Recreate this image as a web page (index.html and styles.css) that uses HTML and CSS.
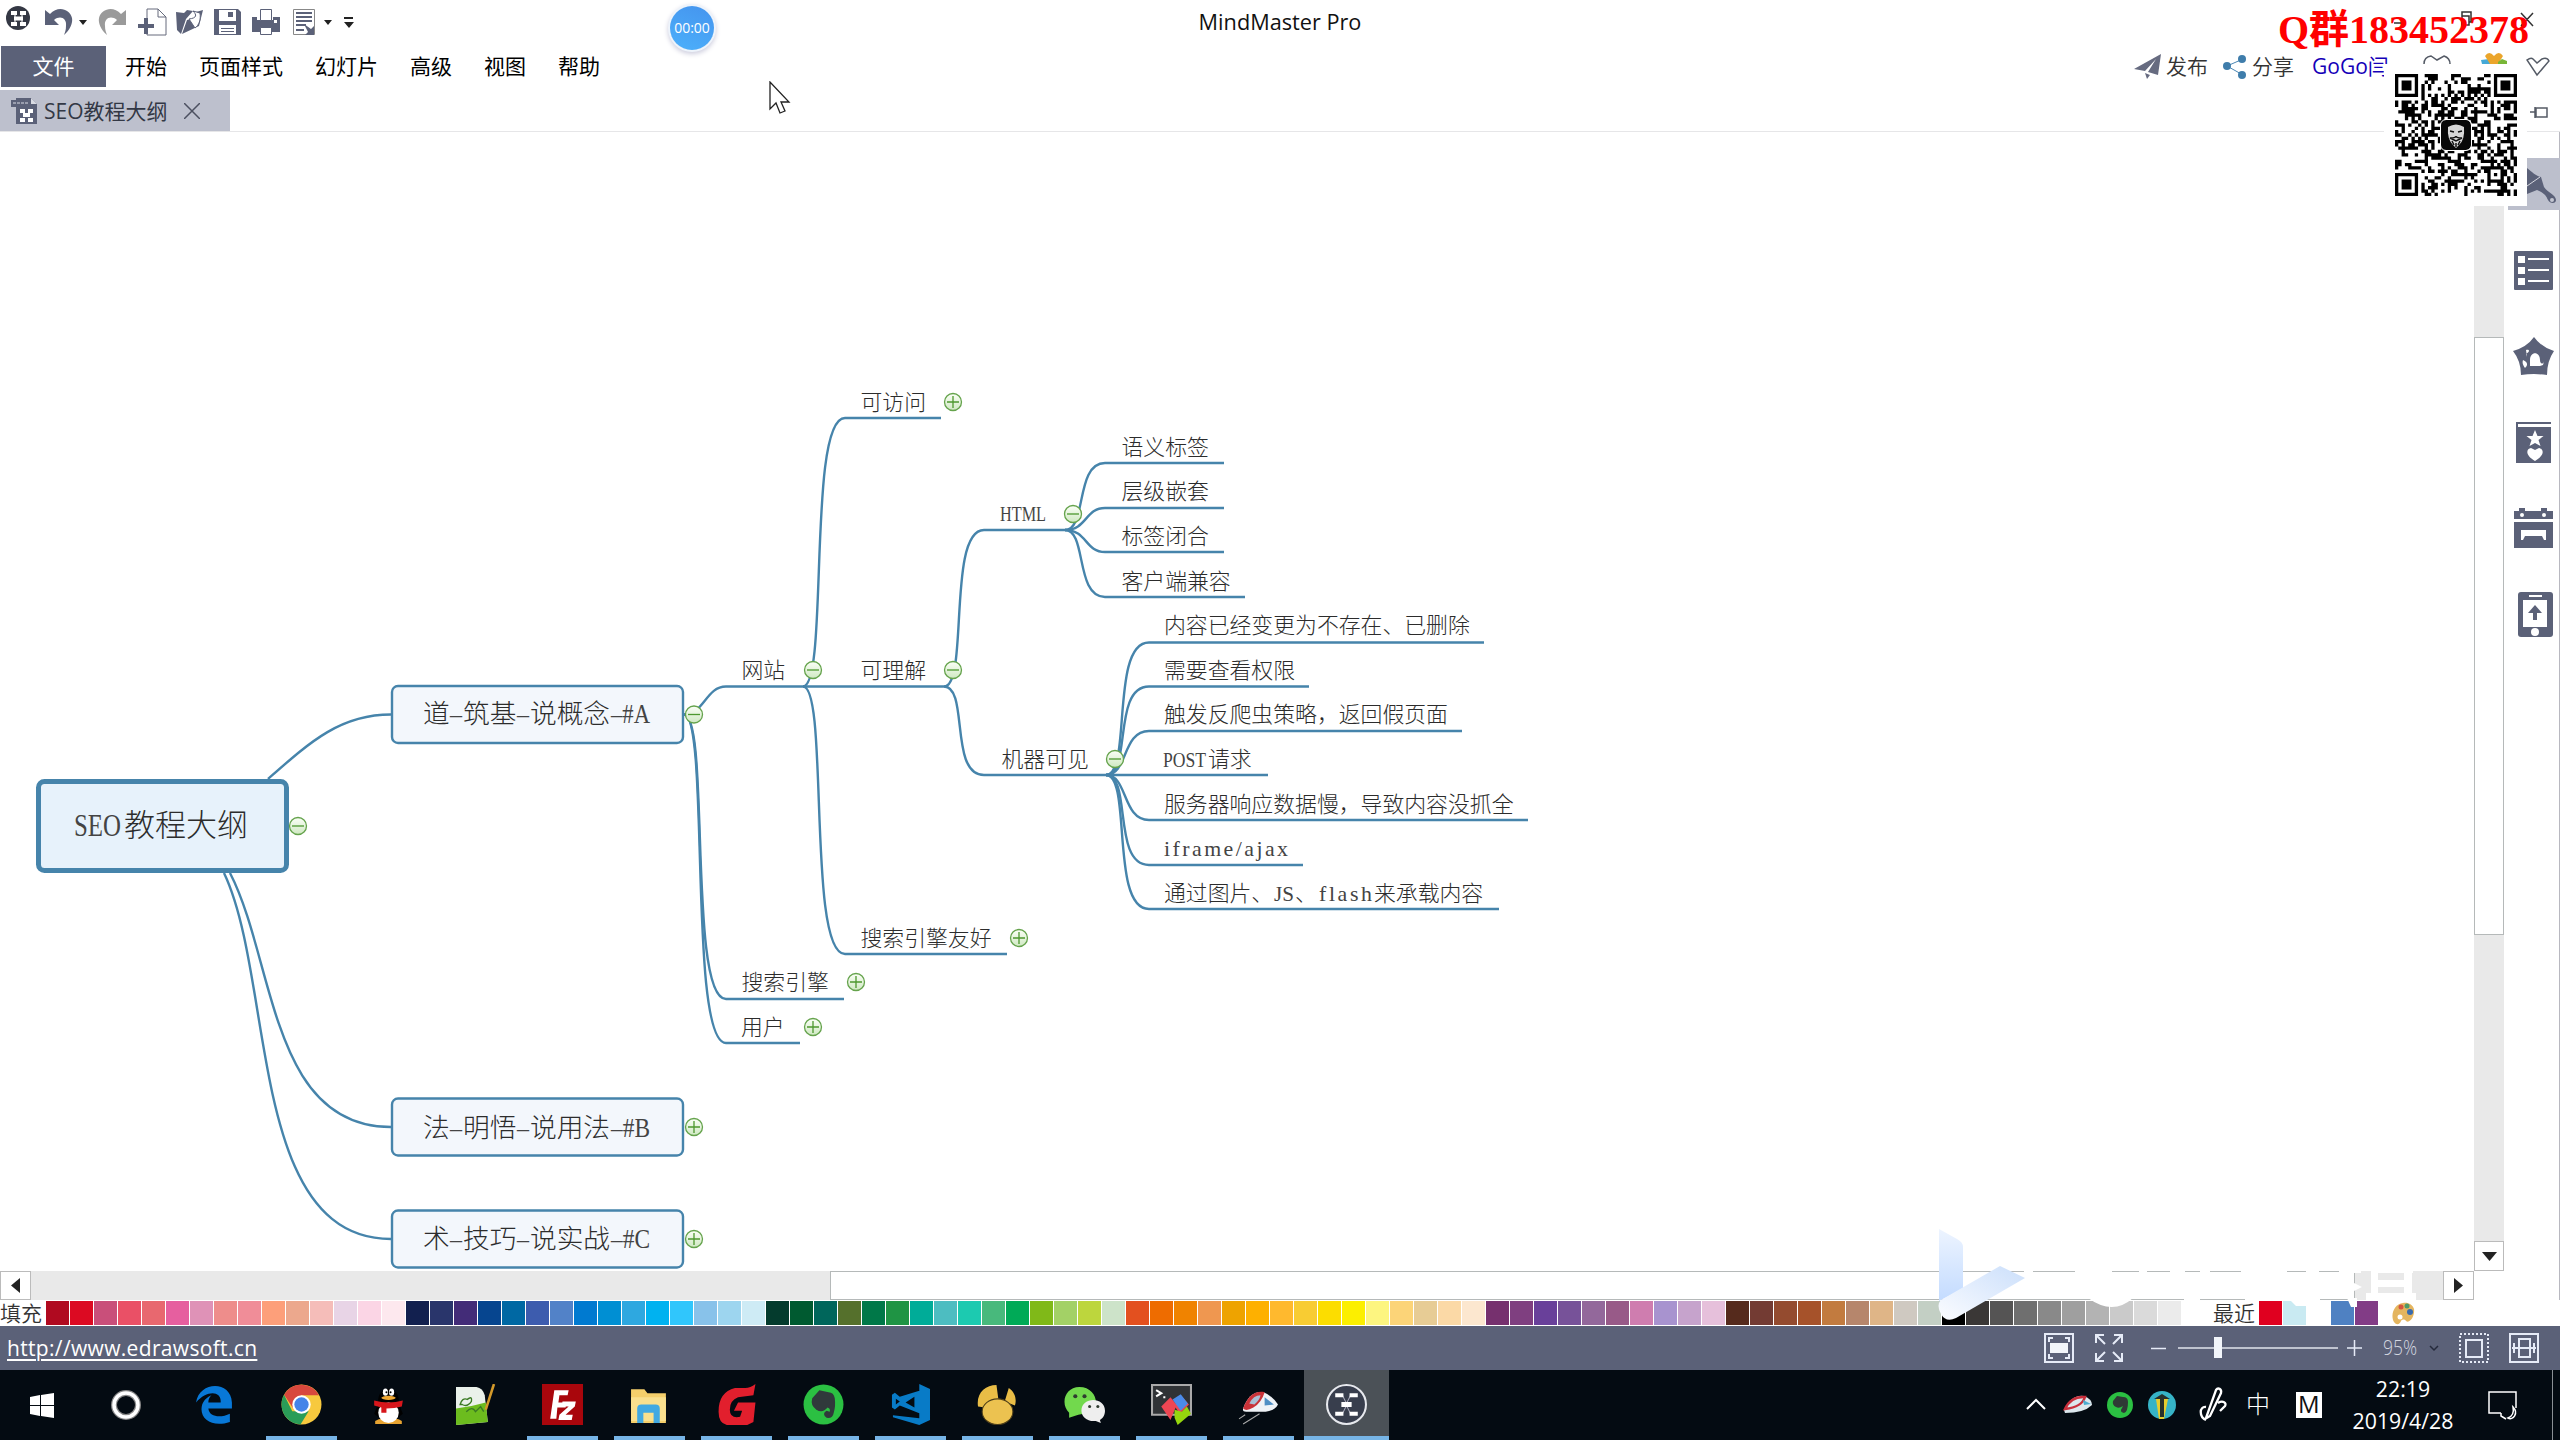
FILE: index.html
```html
<!DOCTYPE html>
<html lang="zh-CN">
<head>
<meta charset="utf-8">
<title>MindMaster Pro</title>
<link rel="stylesheet" href="styles.css">
</head>
<body>
<div class="app">
  <header class="titlebar">
    <svg class="quick" width="370" height="44" viewBox="0 0 370 44">
      <g><circle cx="18" cy="18" r="12" fill="#343844"/><path d="M11 11h6v4h-6zM20 11h6v4h-6zM14 16.500h9v4h-9zM11 22h6v4h-6zM20 22h6v4h-6z" fill="#fff"/><path d="M15 14v9M22 14v9" stroke="#fff"/></g>
      <path d="M45 10v15h14l-5-5c6-5 13-2 12 6 0 4-1 6-2 9 6-5 9-12 8-17-2-9-14-13-22-4z" fill="#5b6178"/>
      <path d="M79 20h8l-4 5zM324 20h8l-4 5zM344 22h10l-5 6zM344 17h9v2h-9z" fill="#222"/>
      <path d="M126 10v15h-14l5-5c-6-5-13-2-12 6 0 4 1 6 2 9-6-5-9-12-8-17 2-9 14-13 22-4z" fill="#9a9a9a"/>
      <path d="M147 19V9h11l8 8v18h-19v-5M158 9v8h8" fill="#fff" stroke="#666b7c"/><path d="M144 18h4v6h6v4h-6v6h-4v-6h-6v-4h6z" fill="#5b6178"/>
      <path d="M176 12l8 1 3-3 6 1-7 8-5 15-4-4zM182 34l5-14 10-2-1-6 7-2-4 16z" fill="#5b6178"/><path d="M189 19c8-1 8-4 4-8l7 2c1 7-1 12-5 15z" fill="#fff" stroke="#5b6178"/>
      <path d="M214 9h24l3 3v23h-27z" fill="#5b6178"/><path d="M219 10h17v11h-17zM219 25h17v9h-17z" fill="#fff"/><path d="M228 12h5v5h-5zM221 28h13v1h-13zM221 31h13v1h-13z" fill="#5b6178"/>
      <path d="M252 17h5v3h16v-3h7v15h-28z" fill="#5b6178"/><path d="M260.500 9.500h11v11h-11zM260.500 27.500h11v7h-11z" fill="#fff" stroke="#5b6178"/><path d="M274 20h3v3h-3z" fill="#fff"/>
      <path d="M293.500 9.500h21v25h-21z" fill="#fff" stroke="#888"/><path d="M296 13h16M296 17h16M296 21h16M296 25h10M296 30h8" stroke="#5b6178" stroke-width="2"/><path d="M304 24l7 5 3-3v9h-9l3-3z" fill="#5b6178"/>
    </svg>
    <h1 class="window-title">MindMaster Pro</h1>
  </header>

  <nav class="menubar">
    <a class="menu-file">文件</a>
    <a>开始</a><a>页面样式</a><a>幻灯片</a><a>高级</a><a>视图</a><a>帮助</a>
    <div class="account">
      <svg width="27" height="26" viewBox="0 0 27 26"><path d="M0 15L27 0l-3 21-10-3 8-13-11 12zM11 19l5 2-3 4z" fill="#666b80"/></svg>
      <span>发布</span>
      <svg class="share" width="24" height="24" viewBox="0 0 24 24"><path d="M20 4L4 11l16 9" fill="none" stroke="#4a86b3"/><g fill="#3f7dab"><circle cx="19" cy="4" r="4"/><circle cx="4" cy="11" r="4"/><circle cx="19" cy="20" r="4"/></g></svg>
      <span>分享</span>
      <span class="user">GoGo闫</span>
    </div>
  </nav>

  <div class="tabs">
    <div class="tab">
      <svg width="27" height="28" viewBox="0 0 27 28"><path d="M5 1h15l6 6v20H5V10H0V3h5z" fill="#5b6178"/><path d="M20 1v6h6z" fill="#d9dbe3"/><path d="M2 6h15" stroke="#d9dbe3" stroke-dasharray="3 1"/><path d="M9 12h5v4H9zM17 12h5v4h-5zM12 16h7v4h-7zM9 21h5v4H9zM17 21h5v4h-5z" fill="#fff"/></svg>
      <span>SEO教程大纲</span>
      <svg class="close" width="16" height="16" viewBox="0 0 16 16"><path d="M0 0l16 16M16 0L0 16" stroke="#4c5060" stroke-width="1.500"/></svg>
    </div>
  </div>

  <main class="workspace">
    <div class="canvas">
      <svg class="map" width="2474" height="1139" viewBox="0 132 2474 1139">
        <defs>
          <linearGradient id="ball" x1="0" y1="0" x2="0" y2="1"><stop offset="0" stop-color="#fbfff7"/><stop offset="1" stop-color="#cfe8c2"/></linearGradient>
          <g id="plus"><circle r="8.500" class="ball"/><path d="M-6 0h12M0-6v12"/></g>
          <g id="minus"><circle r="8.500" class="ball"/><path d="M-6 0h12"/></g>
        </defs>
        <g class="links">
          <path d="M268 779C310 742 340 714.500 391 714.500"/>
          <path d="M230 873C275 960 270 1127 391 1127"/>
          <path d="M224 873C275 980 248 1239 391 1239"/>
          <path d="M684 714.500c20 0 22-28 42-28h218"/>
          <path d="M684 714.500c26 0 4 284.500 42 284.500h118"/>
          <path d="M684 714.500c26 0 4 328.500 42 328.500h74"/>
          <path d="M803 686.500c26 0 4-268.500 42-268.500h96"/>
          <path d="M803 686.500c26 0 4 267.500 42 267.500h162"/>
          <path d="M944 686.500c25 0 3-156.500 40-156.500h81"/>
          <path d="M944 686.500c25 0 5 88.500 40 88.500h122"/>
          <path d="M1065 530c22 0 10-67 40-67h119"/>
          <path d="M1065 530c22 0 20-22 40-22h119"/>
          <path d="M1065 530c22 0 20 22 40 22h119"/>
          <path d="M1065 530c22 0 10 67 40 67h140"/>
          <path d="M1106 775c26 0 4-132.500 43-132.500h335"/>
          <path d="M1106 775c26 0 6-88.500 43-88.500h160"/>
          <path d="M1106 775c22 0 16-44 43-44h313"/>
          <path d="M1106 775h162"/>
          <path d="M1106 775c22 0 16 45 43 45h379"/>
          <path d="M1106 775c26 0 6 90 43 90h154"/>
          <path d="M1106 775c26 0 4 134 43 134h350"/>
        </g>
        <g class="boxes">
          <rect class="root" x="38.500" y="781.500" width="248" height="89" rx="6"/>
          <rect x="392" y="686" width="291" height="57" rx="6"/>
          <rect x="392" y="1098.500" width="291" height="57" rx="6"/>
          <rect x="392" y="1210.500" width="291" height="57" rx="6"/>
        </g>
        <g class="t-root"><text y="836"><tspan class="lat" x="74" textLength="47" lengthAdjust="spacingAndGlyphs">SEO</tspan><tspan x="124">教程大纲</tspan></text></g>
        <g class="t-main">
          <text y="723"><tspan x="423">道</tspan><tspan class="lat" x="450" textLength="12" lengthAdjust="spacingAndGlyphs">–</tspan><tspan x="463">筑基</tspan><tspan class="lat" x="517" textLength="12" lengthAdjust="spacingAndGlyphs">–</tspan><tspan x="530">说概念</tspan><tspan class="lat" x="611" textLength="39" lengthAdjust="spacingAndGlyphs">–#A</tspan></text>
          <text y="1137"><tspan x="423">法</tspan><tspan class="lat" x="450" textLength="12" lengthAdjust="spacingAndGlyphs">–</tspan><tspan x="463">明悟</tspan><tspan class="lat" x="517" textLength="12" lengthAdjust="spacingAndGlyphs">–</tspan><tspan x="530">说用法</tspan><tspan class="lat" x="611" textLength="39" lengthAdjust="spacingAndGlyphs">–#B</tspan></text>
          <text y="1248"><tspan x="423">术</tspan><tspan class="lat" x="450" textLength="12" lengthAdjust="spacingAndGlyphs">–</tspan><tspan x="463">技巧</tspan><tspan class="lat" x="517" textLength="12" lengthAdjust="spacingAndGlyphs">–</tspan><tspan x="530">说实战</tspan><tspan class="lat" x="611" textLength="39" lengthAdjust="spacingAndGlyphs">–#C</tspan></text>
        </g>
        <g class="t-sub">
          <text x="741.500" y="678">网站</text>
          <text x="741.500" y="990">搜索引擎</text>
          <text x="741" y="1035">用户</text>
          <text x="860.500" y="410">可访问</text>
          <text x="860.500" y="678">可理解</text>
          <text x="860.500" y="946">搜索引擎友好</text>
          <text class="lat" x="1000" y="521" textLength="46" lengthAdjust="spacingAndGlyphs">HTML</text>
          <text x="1001.500" y="767">机器可见</text>
          <text x="1121.500" y="455">语义标签</text>
          <text x="1121.500" y="499">层级嵌套</text>
          <text x="1121.500" y="544">标签闭合</text>
          <text x="1121.500" y="589">客户端兼容</text>
          <text x="1164" y="633">内容已经变更为不存在、已删除</text>
          <text x="1164" y="678">需要查看权限</text>
          <text x="1164" y="722">触发反爬虫策略，返回假页面</text>
          <text y="767"><tspan class="lat" x="1163" textLength="43" lengthAdjust="spacingAndGlyphs">POST</tspan><tspan x="1208">请求</tspan></text>
          <text x="1164" y="812">服务器响应数据慢，导致内容没抓全</text>
          <text class="lat" x="1164" y="856" textLength="124" lengthAdjust="spacing">iframe/ajax</text>
          <text y="901"><tspan x="1164">通过图片、</tspan><tspan class="lat" x="1274" textLength="20" lengthAdjust="spacingAndGlyphs">JS</tspan><tspan x="1295">、</tspan><tspan class="lat" x="1319" textLength="53" lengthAdjust="spacing">flash</tspan><tspan x="1374">来承载内容</tspan></text>
        </g>
        <g class="balls">
          <use href="#minus" x="298" y="826"/><use href="#minus" x="694" y="714.500"/><use href="#plus" x="694" y="1127"/><use href="#plus" x="694" y="1239"/>
          <use href="#plus" x="953" y="402"/><use href="#minus" x="1073" y="514"/><use href="#minus" x="813" y="670"/><use href="#minus" x="953" y="670"/>
          <use href="#minus" x="1115" y="759"/><use href="#plus" x="1019" y="938"/><use href="#plus" x="856" y="982"/><use href="#plus" x="813" y="1027"/>
        </g>
      </svg>
      <div class="hscroll">
        <span class="arrow"><svg width="9" height="15"><path d="M9 0v15L0 7.500z" fill="#222"/></svg></span>
        <span class="track-a"></span><span class="thumb-h"></span><span class="track-b"></span>
        <span class="arrow"><svg width="9" height="15"><path d="M0 0v15l9-7.500z" fill="#222"/></svg></span>
      </div>
    </div>
    <div class="vscroll">
      <span class="v-blank"></span><span class="track-c"></span><span class="thumb-v"></span><span class="track-d"></span>
      <span class="arrow-v"><svg width="15" height="9"><path d="M0 0h15L7.500 9z" fill="#222"/></svg></span>
    </div>
    <aside class="side">
      <div class="side-on"><svg width="30" height="40" viewBox="0 0 30 40"><path d="M0 1c5 4 9 8 14 9l3 10c3 5 12 8 12 13 0 4-6 4-8 0-2-5-4-7-11-10L0 27z" fill="#5b6178"/><path d="M0 19L13 10" stroke="#d7d9e0"/><circle cx="25" cy="33" r="2" fill="#c3c6d1"/></svg></div>
      <svg width="56" height="440" viewBox="2504 230 56 440">
        <rect x="2515" y="251" width="39" height="39" rx="1" fill="#5b6178"/><path d="M2519 256h7v7h-7zM2519 267h7v7h-7zM2519 278h7v7h-7z" fill="#fff"/><path d="M2529 259h21M2529 270h21M2529 281h21" stroke="#fff" stroke-width="2"/>
        <path d="M2535 337q7 10 20 14-7 10-7 24-13-2-26 0 0-14-8-24 14-4 21-14z" fill="#5b6178"/><path d="M2531 360c0-9 10-9 10 0 0 4 3 5 4 1l-1 4-3 1h-10zM2524 360c5 2 5 5 2 8-2-3-3-5-2-8zM2527 350c4-1 4 2 0 4l1 3" fill="#fff"/>
        <path d="M2517 422h35v41h-35z" fill="#5b6178"/><path d="M2519 424h33v3h-33z" fill="#fff"/><path d="M2536 430l2.500 6h6l-5 4 2 6-5.500-3-5.500 3 2-6-5-4h6zM2536 461c-10-6-9-12-4-13l4 2 4-2c5 1 6 7-4 13z" fill="#fff"/>
        <path d="M2515 511h5v-3h6v3h16v-3h6v3h6v8h-39zM2515 522h39v26h-39z" fill="#5b6178"/><circle cx="2523" cy="515" r="2" fill="#fff"/><circle cx="2545" cy="515" r="2" fill="#fff"/><path d="M2522 530h25v10h-2l-2-4h-17l-2 4h-2z" fill="#fff"/>
        <rect x="2519" y="592" width="35" height="45" rx="3" fill="#5b6178"/><path d="M2524 600h24v27h-24z" fill="#fff"/><path d="M2530 596h13" stroke="#fff" stroke-width="2"/><circle cx="2536" cy="632" r="4" fill="#fff"/><path d="M2536 605l7 8h-5v7h-4v-7h-5z" fill="#5b6178"/>
      </svg>
    </aside>
  </main>

  <div class="palette">
    <span class="label">填充</span>
    <div class="swatches" id="fills"></div>
    <span class="label recent">最近</span>
    <div class="swatches" id="recent"></div>
    <svg class="paint" width="23" height="23" viewBox="0 0 23 23"><path d="M11 1C2 2-2 13 2 20c3 4 6 2 7-1 1-2 4-2 5 0 4 3 9-5 8-12-1-4-6-7-11-6z" fill="#e4b55f"/><circle cx="9" cy="5" r="2.500" fill="#d6543f"/><circle cx="15" cy="4" r="2.500" fill="#4d9a68"/><circle cx="18" cy="10" r="3" fill="#376bb0"/><circle cx="8" cy="15" r="2.500" fill="#fff"/></svg>
  </div>

  <footer class="status">
    <a class="site">http://www.edrawsoft.cn</a>
    <svg class="zoomer" width="520" height="44" viewBox="2040 1326 520 44">
      <g fill="none" stroke="#e6ebf7" stroke-width="2">
        <path d="M2045 1334h28v28h-28zM2049 1342v-4h4M2069 1342v-4h-4M2049 1354v4h4M2069 1354v4h-4"/>
        <path d="M2105 1344l-9-9M2096 1343v-8h8M2113 1344l9-9M2122 1343v-8h-8M2105 1352l-9 9M2096 1353v8h8M2113 1352l9 9M2122 1353v8h-8"/>
        <path d="M2151 1348.500h15M2347 1348h15M2354.500 1340v16" stroke-width="1.500"/>
        <path d="M2178 1348h160" stroke="#bfc3cf"/>
        <path d="M2430 1346l4 4 4-4" stroke="#252a3c" stroke-width="1.500"/>
        <path d="M2460 1334h28v28h-28z" stroke-dasharray="2 2"/><path d="M2466 1340h16v17h-16zM2510 1334h28v28h-28zM2519 1339h11v18h-11zM2512 1348h24M2514 1343v10M2534 1343v10"/>
      </g>
      <path d="M2050 1343h18v10h-18zM2214 1337h8v21h-8z" fill="#f2f5fa"/>
      <text x="2383" y="1355" textLength="34" lengthAdjust="spacingAndGlyphs">95%</text>
    </svg>
  </footer>

  <div class="taskbar">
    <div class="start"><svg width="26" height="26" viewBox="0 0 26 26"><path d="M1 5l10-2v10H1zM12 3l13-2v12H12zM1 14h10v10L1 22zM12 14h13v12l-13-2z" fill="#fff"/></svg></div>
    <div class="start"><svg width="32" height="32"><circle cx="16" cy="16" r="12" fill="none" stroke="#888" stroke-width="6"/><circle cx="16" cy="16" r="12" fill="none" stroke="#fff" stroke-width="3.500"/></svg></div>
    <div class="apps">
      <div><svg viewBox="0 0 40 40"><path d="M2 18C5-3 36-4 37 18v6H14c1 9 13 9 21 5v8C18 43 4 34 8 20c2-5 5-7 9-9-2 2-3 4-3 7h12c1-12-14-12-24 0z" fill="#0878d7"/></svg></div>
      <div class="open"><svg viewBox="0 0 40 40"><circle cx="20" cy="20" r="19.500" fill="#f7c93e"/><path d="M3 10.500A19.500 19.500 0 0 1 37 11H20l-8 13z" fill="#d8483d"/><path d="M3 10.500A19.500 19.500 0 0 0 19 39.500l8-13-16 0z" fill="#2a9d58"/><circle cx="20" cy="20" r="9" fill="#fff"/><circle cx="20" cy="20" r="7" fill="#4584e8"/></svg></div>
      <div><svg viewBox="0 0 40 40"><path d="M7 36q7-4 13 0 7-4 13 0v3H7z" fill="#e8a431"/><path d="M10 19C8 0 32 0 30 19l4 10-5 4H11l-5-4z" fill="#000"/><ellipse cx="20" cy="28" rx="10" ry="10" fill="#fff"/><path d="M6 16q14 4 28 0l-1 6q-7 2-15 2v4h-5v-5l-7-2z" fill="#d7161b"/><ellipse cx="17" cy="8" rx="2.500" ry="3.500" fill="#fff"/><ellipse cx="23" cy="8" rx="2.500" ry="3.500" fill="#fff"/><ellipse cx="20" cy="13.500" rx="7" ry="2" fill="#f0a831"/><circle cx="18" cy="8" r="1"/><circle cx="22" cy="8" r="1"/></svg></div>
      <div><svg viewBox="0 0 40 40"><path d="M1 3h20q6 1 8 8l3 26-31 3z" fill="#eaf1ea"/><path d="M1 24q15-2 29-6l2 19-31 3z" fill="#6cbc1e"/><path d="M5 20q2-7 7-5 5-4 4 2-4 6-9 3zM11 27q6-6 9 0l5-5 3 5" fill="none" stroke="#3b7a24" stroke-width="1.300"/><path d="M38 0l-8 25" stroke="#d49a2a" stroke-width="2.500"/></svg></div>
      <div class="open"><svg viewBox="0 0 40 40"><path d="M0 0h40v40H0z" fill="#a9060c"/><path d="M8 34L12 6h14l-1 5h-8l-1 7h8l-1 5h-8l-1 11zM20 17h13l-1 5-9 8h7l-1 5H16l1-5 9-8h-7z" fill="#fff"/></svg></div>
      <div class="open"><svg viewBox="0 0 40 40"><path d="M2 5h13l3 4h18v29H2z" fill="#f5cf6b"/><path d="M2 13h34v23H2z" fill="#fae08e"/><path d="M8 38V24q0-4 4-4h14q4 0 4 4v14h-6V28H14v10z" fill="#42a9e2"/></svg></div>
      <div class="open"><svg viewBox="-1.500 0 40 40"><path d="M37 0l-2 11-15 2q-8 3-8 12 0 9 10 7l2-6h-8l4-8h17l-2 19-6 3H9q-8-2-8-13Q1 8 17 4h10q5 0 10-4z" fill="#e21f2d"/></svg></div>
      <div class="open"><svg viewBox="0 0 40 40"><circle cx="20" cy="20" r="19.500" fill="#2bc042"/><path d="M9 14l7-8 9 2q5 0 6 6 1 8-1 14-1 6-7 5-5-4 0-7l3 1q1-3-2-4-5 6-11 2-6-4-4-11z" fill="#30393b"/></svg></div>
      <div class="open"><svg viewBox="-1 0 42 42"><path d="M29 0l11 5v32l-11 5L2 34v-2l27 3zM29 7v23L9 22l-5 4-3-2V11l3-2 5 4zM24 13l-9 6 9 5zM5 15v6l4-3z" fill="#087bc7" fill-rule="evenodd"/></svg></div>
      <div class="open"><svg viewBox="0 0 40 40"><path d="M1 22C-1 9 8 1 19 1l2 15-13 7zM31 4c6 4 8 11 6 17L27 17z" fill="#e9bd46"/><ellipse cx="20" cy="27" rx="15" ry="12.500" fill="#ecc250" stroke="#4d3e19"/></svg></div>
      <div class="open"><svg viewBox="0 0 40 40"><path d="M5 28C-4 19 1 3 15 3s20 14 14 24L14 30l-9 3z" fill="#72d94d"/><path d="M17 26c0-14 23-14 23 0 0 5-3 8-5 9l1 3-5-2c-8 1-14-4-14-10z" fill="#eee"/><g fill="#303c30"><circle cx="11" cy="12" r="2"/><circle cx="20" cy="12" r="2"/><circle cx="25" cy="22" r="1.500"/><circle cx="33" cy="22" r="1.500"/></g></svg></div>
      <div class="open"><svg viewBox="0 0 40 40"><path d="M1 1h38v29H1z" fill="#303336" stroke="#aaa" stroke-width="2"/><path d="M5 6l5 3-5 3M12 13h2" stroke="#fff" stroke-width="2" fill="none"/><path d="M10 22l9-9 5 6 5-8 8 9-9 9-4-6-5 12z" fill="#ed4653"/><path d="M21 15l8-5 7 9-7 7z" fill="#4a8be9"/><path d="M23 25l7 2 5-5 4 7-13 11-3-7z" fill="#95d60d"/></svg></div>
      <div class="open"><svg viewBox="0 0 40 40"><path d="M5 24C9 13 15 7 25 8q8 3 14 12-3 6-12 7H8q-4 0-3-3z" fill="#eef2f6"/><path d="M5 24C9 12 17 6 26 8q-3 10-11 15-7 4-10 1z" fill="#c93238"/><path d="M11 19q4-8 11-8-1 5-6 9z" fill="#a9bfd4"/><path d="M26 13l9 7-9 1z" fill="#4f8fc4"/><path d="M1 34l6-4M5 39l16-10" stroke="#aaa"/></svg></div>
      <div class="open active"><svg viewBox="0 0 40 40"><circle cx="20" cy="20" r="19" fill="#383e4d" stroke="#e7e9ee" stroke-width="2"/><path d="M16 11l4 8 4-8M16 29l4-8 4 8" fill="none" stroke="#aab" stroke-width="1"/><path d="M9 9h8v4H9zM23 9h8v4h-8zM15 17.500h10v5H15zM9 27h8v4H9zM23 27h8v4h-8z" fill="#fff"/></svg></div>
    </div>
    <div class="tray">
      <svg width="300" height="70" viewBox="2026 1370 300 70">
        <path d="M2027 1409l9-9 9 9" fill="none" stroke="#fff" stroke-width="2"/>
        <path d="M2064 1410q8-16 20-14 8 3 8 9-8 8-27 8z" fill="#dce7ed"/><path d="M2065 1409q6-13 20-12-3 10-20 12z" fill="none" stroke="#c9303c" stroke-width="2.500"/><path d="M2083 1400l8 4-7 1z" fill="#4bacd0"/>
        <circle cx="2120" cy="1405" r="13" fill="#2bc042"/><path d="M2113 1401l4-5 6 1q5 0 5 5 0 10-4 11-5-1-2-5l1-2q-4 3-7 1-4-2-3-6z" fill="#2f3a35"/>
        <circle cx="2162" cy="1405" r="14" fill="#36b3c6"/><path d="M2156 1399h12l-4 20h-5z" fill="#e7cd2d"/><path d="M2154 1399l8-5 8 5zM2160 1399h4v18h-4z" fill="#27302b"/>
        <path d="M2206 1407c-7-1-7 10 0 13M2206 1418l10-28c2-3 6-1 5 3l-11 23-5 3zM2218 1403c5-3 9 0 7 3l-5 5" fill="none" stroke="#fff" stroke-width="2.300"/>
        <text class="ime" x="2246" y="1413">中</text>
        <rect x="2296" y="1392" width="26" height="26" fill="#fff"/><text class="ime-m" x="2298" y="1413">M</text>
      </svg>
      <div class="clock"><span>22:19</span><span>2019/4/28</span></div>
      <svg width="60" height="70" viewBox="2480 1370 60 70"><path d="M2501 1413h-12v-21h27v16M2501 1413v3l5 3M2508 1418c5-2 6-6 5-11 6 6 0 14-5 11z" fill="none" stroke="#fff" stroke-width="1.500"/></svg>
      <span class="peek"></span>
    </div>
  </div>

  <svg class="windowctl" width="180" height="130" viewBox="2380 0 180 130">
    <g fill="none" stroke="#555b66" stroke-width="1.500"><path d="M2394 23h9M2462 16h7v9h-7zM2462 16v-4h9v10h-2M2521 13l12 13M2533 13l-12 13" stroke="#333"/>
    <path d="M2424 64q0-7 7-8l6 4 7-4q6 2 6 8M2527 60q4-3 6-1l4 4 5-4q5-2 7 2l-12 14zM2530 112h5M2535 107v11M2536 108h11v9h-11z"/></g>
    <path d="M2481 60l8-1 5 5h-12z" fill="#45a9d7"/><path d="M2485 56q4-6 9 0 5-6 9 0l-5 8h-8z" fill="#eba52b"/><path d="M2498 62l4-3 5 2v3h-9z" fill="#78b637"/>
  </svg>
  <div class="qr">
    <svg id="code" width="122" height="122" viewBox="0 0 37 37"></svg>
    <svg class="face" width="30" height="30" viewBox="0 0 30 30"><rect width="30" height="30" rx="4" fill="#080808"/><path d="M7 7q8-5 16 0 1 13-5 18l-3 3-3-3Q6 19 7 7z" fill="#d7d7d7"/><path d="M9 11l4 1M17 12l4-1M9 18q6 0 6-2 0 2 6 2l-6 3zM15 23v4M11 21l2 4M19 21l-2 4" fill="none" stroke="#111" stroke-width="1.500"/></svg>
  </div>
  <div class="group-no">Q群183452378</div>
  <div class="timer">00:00</div>
  <svg class="pointer" width="24" height="34" viewBox="0 0 24 34"><path d="M1 1v27l6-6 4 10 5-2-4-9h8z" fill="#fff" stroke="#222" stroke-width="1.300"/></svg>
  <svg class="mark" width="500" height="110" viewBox="1930 1220 500 110">
    <defs><linearGradient id="m1" x1="0" y1="0" x2="0" y2="1"><stop offset="0" stop-color="#edf4ff"/><stop offset="1" stop-color="#c3dbff"/></linearGradient><linearGradient id="m2" x1="0" y1="1" x2="1" y2="0"><stop offset="0" stop-color="#fbfcff"/><stop offset="1" stop-color="#cbdffb"/></linearGradient></defs>
    <path d="M1939 1229l18 10q6 3 6 8v42l-24 12z" fill="url(#m1)"/><path d="M1941 1300l59-34 25 12-69 40q-10 5-15-4-5-9 0-14z" fill="url(#m2)"/>
    <path d="M2024 1270h9v3h-9zM2075 1270h37v3h-37zM2139 1270h8v3h-8zM2170 1270h15v3h-15zM2200 1270h10v3h-10zM2241 1270h46v3h-46zM2306 1270h13v3h-13zM2339 1270h22v3h-22zM2184 1298h16v3h-16zM2245 1298h75v3h-75zM2088 1298h45q-20 18-45 0zM2290 1300h16v6h-10zM2347 1298h10v9h-6z" fill="#fff"/>
    <path d="M2352 1282l10 5-10 5zM2371 1270h42v3h-42zM2378 1280h26v7h-26zM2366 1293h50v8h-50zM2371 1270h7v31h-7zM2404 1270h8v31h-8z" fill="#fff"/>
  </svg>
</div>
<script src="app.js"></script>
</body>
</html>
```

FILE: styles.css
```css
* { box-sizing: border-box; }
body { margin: 0; background: #fff; font-family: "Open Sans", "Noto Sans CJK SC", sans-serif; }
.app { position: relative; width: 2560px; height: 1440px; overflow: hidden; display: flex; flex-direction: column; color: #222; }

.titlebar { height: 46px; display: grid; grid-template-columns: 1fr auto 1fr; align-items: start; }
.window-title { margin: 0; font-size: 21.700px; font-weight: 400; line-height: 44px; color: #111; }

.menubar { height: 44px; display: flex; align-items: center; gap: 32px; font-size: 21px; line-height: 41px; padding: 0 0 3px 1px; color: #000; }
.menu-file { width: 105px; height: 41px; background: #5b6178; color: #fff; text-align: center; margin-right: -13px; }
.account { margin-left: auto; display: flex; align-items: center; gap: 5px; width: 426px; color: #333; }
.account span { font-weight: 350; }
.account .share { margin-left: 10px; }
.account .user { margin-left: 13px; color: #1400b8; font-weight: 400; }

.tabs { height: 42px; border-bottom: 1px solid #e6e6e8; display: flex; }
.tab { width: 230px; height: 41px; background: #bdc0cd; display: flex; align-items: center; padding-left: 11px; gap: 6px; font-size: 21px; line-height: 38px; color: #333845; }
.tab .close { margin-left: 10px; }

.workspace { height: 1168px; display: flex; }
.canvas { width: 2474px; }
.map { display: block; font-family: "Noto Sans CJK SC", sans-serif; font-weight: 300; }
.links path { fill: none; stroke: #4684ab; stroke-width: 2.400; }
.boxes rect { fill: #f3f7fc; stroke: #4684ab; stroke-width: 2.400; }
.boxes .root { fill: #e7f2fb; stroke: #4684ab; stroke-width: 5; }
.map text { fill: #2c2c2c; }
.t-root { font-size: 31px; }
.t-main { font-size: 26.700px; }
.t-sub { font-size: 21.850px; }
.map .lat { font-family: "Liberation Serif", serif; font-weight: 400; fill: #444; }
.balls { stroke: #4d982f; stroke-width: 1.300; }
.ball { fill: url(#ball); stroke: #65a34c; }

.hscroll { height: 29px; display: flex; }
.arrow, .arrow-v { background: #fff; border: 1px solid #bbb; display: flex; align-items: center; justify-content: center; }
.arrow { width: 31px; }
.track-a { width: 799px; background: #e9e9e9; }
.thumb-h { width: 1525px; border: 1px solid #b5b9b9; }
.track-b { flex: 1; background: #e9e9e9; }
.vscroll { width: 30px; height: 1139px; display: flex; flex-direction: column; }
.v-blank { height: 74px; }
.track-c { height: 131px; background: #e9e9e9; }
.thumb-v { height: 598px; border: 1px solid #b5b9b9; }
.track-d { flex: 1; background: #e9e9e9; }
.arrow-v { height: 30px; }
.side { width: 56px; border-right: 1px solid #b8b8c0; padding-top: 26px; height: 1168px; display: flex; flex-direction: column; }
.side-on { height: 52px; margin: 0 -1px 20px 4px; padding: 9px 0 0 19px; background: #bcbfcc; }
.side > svg { display: block; flex: none; margin-left: -1px; }

.palette { height: 26px; display: flex; align-items: center; }
.label { width: 46px; font-size: 21px; line-height: 26px; color: #333; font-weight: 350; }
.swatches { display: flex; gap: 1px; }
.swatches i { width: 23px; height: 24px; }
.recent { margin-left: 32px; width: 46px; }
.paint { margin-left: 14px; }

.status { height: 44px; background: #5b6178; display: flex; align-items: center; justify-content: space-between; padding-left: 7px; }
.site { color: #fff; font-size: 21px; text-decoration: underline; text-underline-offset: 3px; letter-spacing: .33px; }
.zoomer text { font: 300 20px "Open Sans", sans-serif; fill: #d4d7e0; }

.taskbar { height: 70px; background: #040b12; display: flex; color: #fff; }
.start { width: 84px; display: flex; align-items: center; justify-content: center; padding-bottom: 1px; }
.apps { display: flex; margin-left: 3px; }
.apps > div { width: 87px; height: 70px; display: flex; flex-direction: column; align-items: center; padding-top: 14px; }
.apps svg { width: 41px; height: 41px; }
.apps .open::after { content: ""; width: 71px; height: 4px; margin-top: 11px; background: #76b4e6; }
.apps .active { width: 85px; margin-left: 2px; background: #4b5157; }
.apps .active::after { width: 85px; }
.tray { margin-left: auto; width: 534px; display: flex; }
.clock { width: 154px; display: flex; flex-direction: column; align-items: center; justify-content: center; gap: 2px; font-size: 21.300px; line-height: 30px; }
.peek { width: 1px; margin-left: 12px; background: #8b9095; }
.ime { font: 300 24px "Noto Sans CJK SC", sans-serif; fill: #fff; }
.ime-m { font: 24px "Open Sans", sans-serif; fill: #111; }

.windowctl { position: absolute; left: 2380px; top: 0; }
.qr { position: absolute; left: 2384px; top: 64px; width: 143px; height: 142px; background: #fff; padding: 10px 11px; }
.qr .face { position: absolute; left: 57px; top: 56px; outline: 1.500px solid #fff; border-radius: 5px; }
.group-no { position: absolute; left: 2278px; top: 6px; font: bold 40px/48px "Liberation Serif", "Noto Sans CJK SC", serif; color: #f00; white-space: nowrap; }
.timer { position: absolute; left: 670px; top: 6px; width: 44px; height: 44px; border-radius: 50%; background: linear-gradient(200deg, #4594ee, #4cb0fb); box-shadow: 0 0 0 2px #eef4fb, 0 2px 5px 2px #ccd; color: #fff; font-size: 14px; line-height: 44px; text-align: center; }
.pointer { position: absolute; left: 769px; top: 81px; }
.mark { position: absolute; left: 1930px; top: 1220px; }
```

FILE: app.js
```js
var fills = ('b00a20 dc0a22 c94f7a ea5066 e8686f e65f9f df92b7 ee8d8b f08d98 fd9f7a eca88d f5bdb9 e8d4e6 fbd5e5 fde8ee ' +
  '12204f 29356b 432c78 06458f 0068a3 3d5cae 5282c8 007ad0 008fd3 2ea8e0 00b2f0 30c6fc 88c2ea 9dd5ef ceebf5 ' +
  '043b2d 005a30 00665b 55702c 007848 1f9444 00ac98 4dbdc1 1ccab0 48b97c 00aa57 80b918 a3d166 bdd63d cde3c9 ' +
  'e3501f ee6c00 f08300 ef9750 eea300 feb000 ffb92e f8cc33 fcdd00 fcef00 fdf580 fcd478 e7cc95 fbd9a6 fce7cf ' +
  '76306e 7f3f80 69409a 775299 93689b 985a88 cf7daf a893cf c6a3cc e6c0db ' +
  '552a1c 733b33 944b2f a6522a c27b3f b6866c dfb587 cfc9c1 c3cfc4 ' +
  '000000 3a3736 555454 6f6f6f 898989 9f9f9f b3b3b3 cacaca dadada ebebeb').split(' ');
function paint(id, colors) {
  document.getElementById(id).innerHTML = colors.map(function (c) {
    return '<i style="background:#' + c + '"></i>';
  }).join('');
}
paint('fills', fills);
paint('recent', ['e0001f', 'c9eaf2', 'ffffff', '4f81c2', '823c86']);

// 37x37 code: three finder squares, one alignment square, timing lines, data cells
var seed = 52378, d = '';
function ring(x, y, cx, cy, r) {
  var m = Math.max(Math.abs(x - cx), Math.abs(y - cy));
  return m > r ? -1 : m;
}
for (var y = 0; y < 37; y++) for (var x = 0; x < 37; x++) {
  seed = (seed * 1103515 + 12345) % 2147483648;
  var on = (seed / 2147483648) < 0.52, f = [[3, 3], [33, 3], [3, 33]], k, m;
  if (x === 6 || y === 6) on = (x + y) % 2 === 0;
  for (k = 0; k < 3; k++) {
    m = ring(x, y, f[k][0], f[k][1], 4);
    if (m >= 0) on = m === 3 || m < 2;
  }
  m = ring(x, y, 30, 30, 2);
  if (m >= 0) on = m !== 1;
  if (on) d += 'M' + x + ' ' + y + 'h1v1h-1z';
}
document.getElementById('code').innerHTML = '<path d="' + d + '"/>';
```
